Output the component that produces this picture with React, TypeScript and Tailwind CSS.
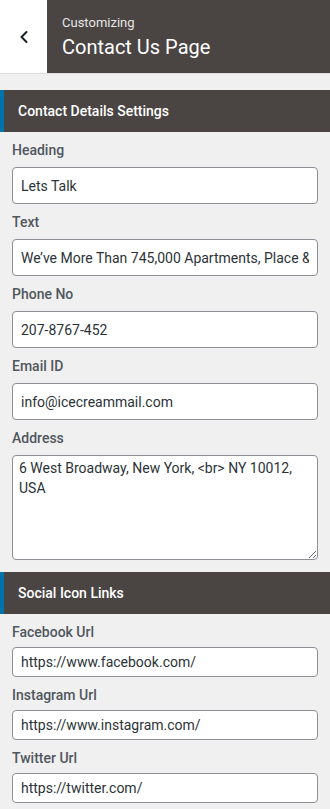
import { ChevronLeft } from 'lucide-react';

const font = { fontFamily: 'Roboto, "Noto Sans", sans-serif' };

function Field({ label, value, small }: { label: string; value: string; small?: boolean }) {
  return (
    <div className="flex flex-col">
      <label className={`text-[14px] font-medium text-[#50575e] leading-[17px] ${small ? 'mb-[6px]' : 'mb-[8px]'}`}>{label}</label>
      <input
        readOnly
        value={value}
        className={`w-full rounded-[4px] border border-[#8c8f94] bg-white px-[8px] text-[14px] text-[#2c3338] outline-none ${small ? 'h-[30px]' : 'h-[37px]'}`}
      />
    </div>
  );
}

function SectionTitle({ title }: { title: string }) {
  return (
    <div className="flex h-[42px] items-center border-l-[4px] border-[#0073aa] bg-[#4a4543] pl-[14px]">
      <h3 className="text-[14px] font-medium text-white">{title}</h3>
    </div>
  );
}

export default function App() {
  return (
    <div className="min-h-[809px] w-[330px] bg-[#f0f0f0]" style={font}>
      {/* шапка */}
      <div className="flex h-[74px] border-b border-[#dcdcde]">
        <button className="flex w-[47px] items-center justify-center bg-white text-[#1d2327]">
          <ChevronLeft size={20} strokeWidth={2.5} />
        </button>
        <div className="flex flex-1 flex-col justify-center bg-[#4a4543] pl-[15px]">
          <span className="text-[13px] leading-[16px] text-[#e6e6e6]">Customizing</span>
          <span className="mt-[5px] text-[20px] leading-[23px] text-white">Contact Us Page</span>
        </div>
      </div>

      <div className="mt-[16px]">
        <SectionTitle title="Contact Details Settings" />
        <div className="flex flex-col gap-[10px] px-[12px] pt-[10px] pb-[12px]">
          <Field label="Heading" value="Lets Talk" />
          <Field label="Text" value="We’ve More Than 745,000 Apartments, Place & Plots." />
          <Field label="Phone No" value="207-8767-452" />
          <Field label="Email ID" value="info@icecreammail.com" />
          <div className="flex flex-col">
            <label className="mb-[8px] text-[14px] font-medium leading-[17px] text-[#50575e]">Address</label>
            <textarea
              readOnly
              value={'6 West Broadway, New York, <br> NY 10012, USA'}
              className="h-[105px] w-full resize-y rounded-[4px] border border-[#8c8f94] bg-white px-[6px] py-[2px] text-[14px] leading-[20px] text-[#2c3338] outline-none"
            />
          </div>
        </div>
        <SectionTitle title="Social Icon Links" />
        <div className="flex flex-col gap-[10px] px-[12px] pt-[10px]">
          <Field small label="Facebook Url" value="https://www.facebook.com/" />
          <Field small label="Instagram Url" value="https://www.instagram.com/" />
          <Field small label="Twitter Url" value="https://twitter.com/" />
        </div>
      </div>
    </div>
  );
}
